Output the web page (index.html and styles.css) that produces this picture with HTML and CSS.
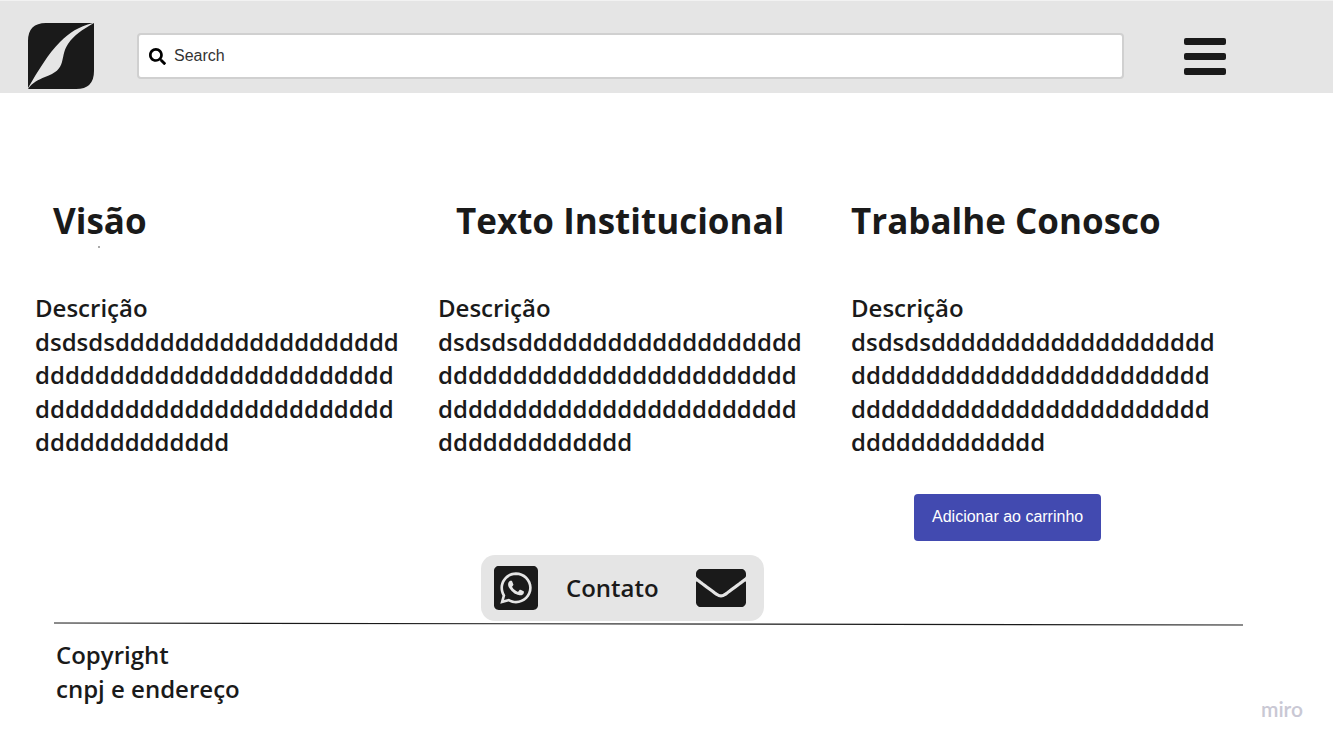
FILE: index.html
```html
<!DOCTYPE html>
<html lang="pt-BR">
<head>
<meta charset="utf-8">
<meta name="viewport" content="width=device-width, initial-scale=1">
<title>Institucional</title>
<link rel="stylesheet" href="styles.css">
</head>
<body>
<header class="topbar">
  <a class="logo" href="#" aria-label="Início">
    <svg viewBox="0 0 66 66" width="66" height="66" aria-hidden="true">
      <path fill="#1a1a1a" d="M0 65V18Q0 0 18 0H65C50 4 42 9 32 19C20 31 10 48 0 65Z"/>
      <path fill="#1a1a1a" d="M66 0V48Q66 66 48 66H0C5 59 10 57 17 54C28 50 32 46 34 39C36 31 36 27 40 21C46 12 54 7 66 0Z"/>
    </svg>
  </a>
  <form class="search" role="search">
    <svg class="search-icon" viewBox="0 0 512 512" width="17" height="17" aria-hidden="true"><path d="M505 442.700L405.300 343c-4.500-4.500-10.600-7-17-7H372c27.600-35.300 44-79.700 44-128C416 93.100 322.900 0 208 0S0 93.100 0 208s93.100 208 208 208c48.300 0 92.700-16.400 128-44v16.300c0 6.400 2.500 12.500 7 17l99.700 99.700c9.400 9.400 24.600 9.400 33.900 0l28.300-28.300c9.400-9.400 9.400-24.600.1-34zM208 336c-70.700 0-128-57.200-128-128 0-70.700 57.200-128 128-128 70.700 0 128 57.200 128 128 0 70.700-57.200 128-128 128z"/></svg>
    <input class="search-input" type="search" placeholder="Search" aria-label="Search">
  </form>
  <button class="menu" type="button" aria-label="Menu">
    <span class="menu-bar"></span><span class="menu-bar"></span><span class="menu-bar"></span>
  </button>
</header>

<main class="columns">
  <section class="column">
    <div class="column-head column-head-inset">
      <h2 class="title">Visão</h2>
      <div class="mark"></div>
    </div>
    <p class="text">Descrição<br>dsdsdsdddddddddddddddddddddddddddddddddddddddddddddddddddddddddddddddddddddddddddddddd</p>
  </section>
  <section class="column">
    <div class="column-head column-head-inset">
      <h2 class="title">Texto Institucional</h2>
    </div>
    <p class="text">Descrição<br>dsdsdsdddddddddddddddddddddddddddddddddddddddddddddddddddddddddddddddddddddddddddddddd</p>
  </section>
  <section class="column">
    <div class="column-head">
      <h2 class="title">Trabalhe Conosco</h2>
    </div>
    <p class="text">Descrição<br>dsdsdsdddddddddddddddddddddddddddddddddddddddddddddddddddddddddddddddddddddddddddddddd</p>
    <button class="cart" type="button">Adicionar ao carrinho</button>
  </section>
</main>

<footer class="footer">
  <div class="contact">
    <a class="contact-link" href="#" aria-label="WhatsApp">
      <svg viewBox="0 32 448 448" width="44" height="44" aria-hidden="true"><path fill="#1a1a1a" d="M224 122.800c-72.700 0-131.800 59.100-131.900 131.800 0 24.900 7 49.200 20.200 70.100l3.100 5-13.300 48.600 49.900-13.100 4.800 2.900c20.200 12 43.400 18.400 67.100 18.400h.1c72.600 0 133.300-59.100 133.300-131.800 0-35.200-15.200-68.300-40.100-93.200-25-25-58-38.700-93.200-38.700zm77.500 188.400c-3.300 9.300-19.100 17.700-26.700 18.800-12.600 1.900-22.400.9-47.500-9.900-39.700-17.200-65.700-57.200-67.700-59.800-2-2.600-16.200-21.500-16.200-41s10.200-29.100 13.900-33.100c3.600-4 7.900-5 10.600-5 2.600 0 5.300 0 7.600.1 2.400.1 5.700-.9 8.900 6.800 3.300 7.900 11.200 27.400 12.200 29.400s1.700 4.300.3 6.900c-7.600 15.200-15.700 14.600-11.600 21.600 15.300 26.300 30.600 35.400 53.900 47.100 4 2 6.300 1.700 8.600-1 2.300-2.600 9.900-11.600 12.500-15.500 2.600-4 5.300-3.300 8.900-2 3.600 1.300 23.100 10.900 27.100 12.900s6.600 3 7.600 4.600c.9 1.900.9 9.900-2.400 19.100zM400 32H48C21.500 32 0 53.500 0 80v352c0 26.500 21.500 48 48 48h352c26.500 0 48-21.500 48-48V80c0-26.500-21.500-48-48-48zM223.900 413.200c-26.600 0-52.700-6.700-75.800-19.300L64 416l22.500-82.200c-13.900-24-21.200-51.300-21.200-79.300C65.400 167.100 136.500 96 223.900 96c42.400 0 82.200 16.500 112.200 46.500 29.900 30 47.900 69.800 47.900 112.200 0 87.400-72.700 158.500-160.100 158.500z"/></svg>
    </a>
    <span class="contact-label">Contato</span>
    <a class="contact-link" href="#" aria-label="E-mail">
      <svg viewBox="0 64 512 384" width="50" height="38" preserveAspectRatio="none" aria-hidden="true"><path fill="#1a1a1a" d="M502.300 190.800c3.900-3.100 9.700-.2 9.700 4.700V400c0 26.500-21.500 48-48 48H48c-26.500 0-48-21.500-48-48V195.600c0-5 5.700-7.800 9.700-4.700 22.400 17.400 52.100 39.500 154.100 113.600 21.100 15.400 56.700 47.800 92.200 47.600 35.700.3 72-32.800 92.300-47.600 102-74.100 131.600-96.300 154-113.700zM256 320c23.200.4 56.600-29.200 73.400-41.400 132.700-96.300 142.800-104.700 173.400-128.700 5.800-4.500 9.200-11.500 9.200-18.900v-19c0-26.500-21.500-48-48-48H48c-26.500 0-48 21.500-48 48v19c0 7.400 3.400 14.300 9.200 18.900 30.600 23.900 40.700 32.400 173.400 128.700 16.800 12.200 50.200 41.800 73.400 41.400z"/></svg>
    </a>
  </div>
  <svg class="rule" viewBox="0 0 1189 4" preserveAspectRatio="none" aria-hidden="true"><line x1="0" y1="1" x2="1189" y2="3" stroke="#1a1a1a" stroke-width="1.200"/></svg>
  <div class="footer-row">
    <p class="legal">Copyright<br>cnpj e endereço</p>
    <span class="brand">miro</span>
  </div>
</footer>
</body>
</html>
```
FILE: styles.css
```css
* {
  box-sizing: border-box;
}

body {
  margin: 0;
  background: #fff;
  color: #1a1a1a;
  font-family: "Open Sans", "Noto Sans", sans-serif;
  font-size: 24px;
  font-weight: 600;
  line-height: 1.4;
}

h2,
p {
  margin: 0;
}

.topbar {
  display: flex;
  align-items: center;
  padding: 22px 107px 4px 28px;
  border-top: 1px solid #f2f2f2;
  background: #e5e5e5;
}

.logo,
.contact-link {
  display: flex;
}

.search {
  display: flex;
  flex: 1;
  align-items: center;
  gap: 8px;
  height: 46px;
  margin: 0 60px 0 43px;
  padding: 0 10px;
  border: 2px solid #d0d0d0;
  border-radius: 4px;
  background: #fff;
}

.search-input {
  flex: 1;
  min-width: 0;
  padding: 0;
  border: 0;
  outline: 0;
  background: transparent;
  color: #1a1a1a;
  font: 400 16px/20px "Liberation Sans", Arial, sans-serif;
}

.search-input::placeholder {
  color: #333;
  opacity: 1;
}

.menu {
  display: flex;
  flex-direction: column;
  gap: 8px;
  width: 42px;
  padding: 0;
  border: 0;
  background: transparent;
  cursor: pointer;
}

.menu-bar {
  height: 7px;
  border-radius: 2px;
  background: #1a1a1a;
}

.columns {
  display: grid;
  grid-template-columns: 403fr 413fr 447fr;
  padding: 104px 35px 0;
}

.column-head {
  height: 94px;
}

.column-head-inset {
  padding-left: 18px;
}

.title {
  font-size: 35px;
  font-weight: 700;
  line-height: 48px;
}

.mark {
  width: 2px;
  height: 2px;
  margin: 1px 0 0 45px;
  background: #aaa;
}

.text {
  max-width: 368px;
  overflow-wrap: anywhere;
}

.cart {
  display: block;
  height: 47px;
  margin: 35px 0 0 63px;
  padding: 0 18px;
  border: 0;
  border-radius: 4px;
  background: #424ab0;
  color: #fff;
  font: 400 16px/20px "Liberation Sans", Arial, sans-serif;
  cursor: pointer;
}

.footer {
  padding: 14px 30px 0 54px;
}

.contact {
  display: flex;
  align-items: center;
  width: 283px;
  height: 66px;
  margin-left: 427px;
  padding: 0 18px 0 13px;
  border-radius: 14px;
  background: #e5e5e5;
}

.contact-label {
  margin: 0 auto 0 28px;
}

.rule {
  display: block;
  width: calc(100% - 60px);
  height: 4px;
  margin-top: 1px;
}

.footer-row {
  display: flex;
  align-items: flex-end;
  justify-content: space-between;
  padding: 12px 0 24px 2px;
}

.legal {
  padding-bottom: 16px;
}

.brand {
  color: #c9c8d4;
  font: 600 21px/24px Lato, sans-serif;
}
```
